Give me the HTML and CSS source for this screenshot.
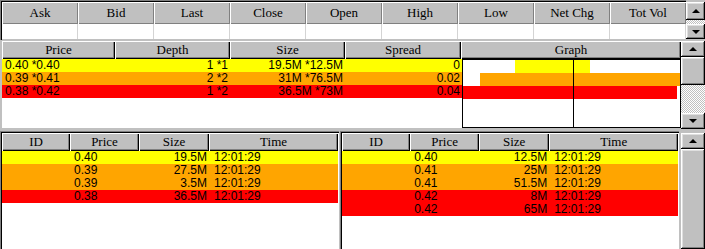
FILE: index.html
```html
<!DOCTYPE html>
<html lang="en">
<head>
  <meta charset="UTF-8" />
  <title>Market Depth</title>
  <link rel="stylesheet" href="styles.css">
</head>
<body>

  <div class="window">

    <!-- quote strip -->
    <div class="pane quotes">
      <div class="sheet">
        <div class="hdr cols-quote">
          <div class="hcell">Ask</div>
          <div class="hcell">Bid</div>
          <div class="hcell">Last</div>
          <div class="hcell">Close</div>
          <div class="hcell">Open</div>
          <div class="hcell">High</div>
          <div class="hcell">Low</div>
          <div class="hcell">Net Chg</div>
          <div class="hcell">Tot Vol</div>
        </div>
        <div class="quote-row cols-quote">
          <div></div><div></div><div></div><div></div><div></div>
          <div></div><div></div><div></div><div></div>
        </div>
      </div>
      <div class="vscroll narrow">
        <div class="sb-btn up"><span class="arrow-up"></span></div>
        <div class="sb-track"></div>
        <div class="sb-btn down"><span class="arrow-down"></span></div>
      </div>
    </div>

    <!-- depth book + graph -->
    <div class="pane book">
      <div class="sheet">
        <div class="hdr cols-book">
          <div class="hcell">Price</div>
          <div class="hcell">Depth</div>
          <div class="hcell">Size</div>
          <div class="hcell">Spread</div>
          <div class="hcell">Graph</div>
        </div>
        <div class="book-body">
          <div class="book-rows">
            <div class="brow lvl-1">
              <div class="left">0.40 *0.40</div>
              <div class="right">1 *1</div>
              <div class="right">19.5M *12.5M</div>
              <div class="right">0</div>
            </div>
            <div class="brow lvl-2">
              <div class="left">0.39 *0.41</div>
              <div class="right">2 *2</div>
              <div class="right">31M *76.5M</div>
              <div class="right">0.02</div>
            </div>
            <div class="brow lvl-3">
              <div class="left">0.38 *0.42</div>
              <div class="right">1 *2</div>
              <div class="right">36.5M *73M</div>
              <div class="right">0.04</div>
            </div>
          </div>
          <div class="graph">
            <div class="bar-row"><div class="bar lvl-1" style="margin-left: 52px; width: 75px;"></div></div>
            <div class="bar-row"><div class="bar lvl-2" style="margin-left: 17px; width: 200px;"></div></div>
            <div class="bar-row"><div class="bar lvl-3" style="margin-left: 0; width: 214px;"></div></div>
          </div>
        </div>
      </div>
      <div class="vscroll">
        <div class="sb-btn up"><span class="arrow-up"></span></div>
        <div class="sb-thumb short"></div>
        <div class="sb-track"></div>
        <div class="sb-btn down"><span class="arrow-down"></span></div>
      </div>
    </div>

    <!-- time & sales -->
    <div class="trades">
      <div class="pane tape">
        <div class="hdr cols-tape">
          <div class="hcell">ID</div>
          <div class="hcell">Price</div>
          <div class="hcell">Size</div>
          <div class="hcell">Time</div>
        </div>
        <div class="tape-body">
          <div class="trow cols-tape lvl-1"><div></div><div class="px">0.40</div><div class="right">19.5M</div><div class="tm">12:01:29</div></div>
          <div class="trow cols-tape lvl-2"><div></div><div class="px">0.39</div><div class="right">27.5M</div><div class="tm">12:01:29</div></div>
          <div class="trow cols-tape lvl-2"><div></div><div class="px">0.39</div><div class="right">3.5M</div><div class="tm">12:01:29</div></div>
          <div class="trow cols-tape lvl-3"><div></div><div class="px">0.38</div><div class="right">36.5M</div><div class="tm">12:01:29</div></div>
        </div>
      </div>
      <div class="pane tape">
        <div class="hdr cols-tape">
          <div class="hcell">ID</div>
          <div class="hcell">Price</div>
          <div class="hcell">Size</div>
          <div class="hcell">Time</div>
        </div>
        <div class="tape-body">
          <div class="trow cols-tape lvl-1"><div></div><div class="px">0.40</div><div class="right">12.5M</div><div class="tm">12:01:29</div></div>
          <div class="trow cols-tape lvl-2"><div></div><div class="px">0.41</div><div class="right">25M</div><div class="tm">12:01:29</div></div>
          <div class="trow cols-tape lvl-2"><div></div><div class="px">0.41</div><div class="right">51.5M</div><div class="tm">12:01:29</div></div>
          <div class="trow cols-tape lvl-3"><div></div><div class="px">0.42</div><div class="right">8M</div><div class="tm">12:01:29</div></div>
          <div class="trow cols-tape lvl-3"><div></div><div class="px">0.42</div><div class="right">65M</div><div class="tm">12:01:29</div></div>
        </div>
      </div>
      <div class="vscroll tall">
        <div class="sb-btn up"><span class="arrow-up"></span></div>
        <div class="sb-thumb fill"></div>
      </div>
    </div>

  </div>

</body>
</html>
```

FILE: styles.css
```css
body {
  margin: 0;
  background: #c0c0c0;
  font-family: 'Liberation Sans', Arial, sans-serif;
  font-size: 12px;
  color: #000;
  overflow: hidden;
}

.window {
  width: 705px;
  height: 249px;
  display: flex;
  flex-direction: column;
  background: #c0c0c0;
}

.pane {
  display: flex;
}

/* header cells, classic raised look */
.hdr {
  display: grid;
  font-family: 'Liberation Serif', 'Times New Roman', serif;
  font-size: 13px;
}

.hcell {
  display: flex;
  align-items: center;
  justify-content: center;
  background: #c0c0c0;
  box-shadow: inset 1px 1px #fff, inset -1px -1px #000, inset -2px -2px #808080;
}

.left { padding-left: 3px; }
.right { text-align: right; padding-right: 2px; }

.lvl-1 { background: #ffff00; }
.lvl-2 { background: #ffa500; }
.lvl-3 { background: #ff0000; }

/* ---- quote strip ---- */
.quotes {
  height: 40px;
}

.quotes .sheet {
  flex: 1;
  padding: 2px 0 1px 2px;
  box-shadow: inset 1px 1px #808080, inset 2px 2px #000;
}

.cols-quote {
  grid-template-columns: repeat(9, 76px);
}

.quotes .hdr {
  height: 22px;
}

.quotes .hcell {
  box-shadow: inset 1px 1px #fff, inset -1px -1px #808080;
}

.quote-row {
  display: grid;
  height: 15px;
  background: #fff;
}

.quote-row div {
  border-right: 1px solid #d4d4d4;
}

/* ---- depth book ---- */
.book {
  height: 89px;
}

.book .sheet {
  flex: 1;
  padding: 1px 0 1px 2px;
  display: flex;
  flex-direction: column;
}

.cols-book {
  grid-template-columns: 113px 115px 115px 116px 1fr;
  height: 18px;
}

.book-body {
  flex: 1;
  display: flex;
  background: #fff;
}

.book-rows {
  width: 460px;
}

.brow {
  display: grid;
  grid-template-columns: 113px 115px 115px 116px;
  height: 13px;
  line-height: 13px;
  white-space: nowrap;
}

.brow div:last-child {
  padding-right: 1px;
}

.graph {
  flex: 1;
  border: 1px solid #000;
  position: relative;
}

.graph::after {
  content: '';
  position: absolute;
  top: 0;
  bottom: 0;
  left: 110px;
  width: 1px;
  background: #000;
}

.bar-row {
  height: 13px;
  display: flex;
}

.bar {
  height: 13px;
}

/* ---- time & sales ---- */
.trades {
  flex: 1;
  display: flex;
  gap: 1px;
  margin-top: 2px;
}

.tape {
  width: 340px;
  flex-direction: column;
  padding: 2px 1px 0 2px;
  box-shadow: inset 1px 1px #808080, inset 2px 2px #000, inset -1px 0 #fff;
}

.cols-tape {
  grid-template-columns: 68px 69px 70px 1fr;
}

.tape .hdr {
  height: 18px;
}

.tape-body {
  flex: 1;
  background: #fff;
}

.trow {
  display: grid;
  height: 13px;
  line-height: 13px;
  white-space: nowrap;
}

.trow .px { padding-left: 4px; }
.trow .tm { padding-left: 5px; }

/* ---- scrollbars ---- */
.vscroll {
  width: 24px;
  display: flex;
  flex-direction: column;
  padding-top: 1px;
}

.vscroll.narrow {
  width: 19px;
  padding-top: 2px;
  padding-bottom: 1px;
}

.vscroll.tall {
  padding: 2px 0 0 1px;
}

.sb-btn {
  height: 16px;
  display: flex;
  align-items: center;
  justify-content: center;
  background: #c0c0c0;
  box-shadow: inset -1px -1px #000, inset 1px 1px #fff, inset -2px -2px #808080, inset 2px 2px #dfdfdf;
}

.narrow .sb-btn.up { height: 18px; }
.narrow .sb-btn.down { height: 15px; }

.sb-thumb {
  background: #c0c0c0;
  box-shadow: inset -1px -1px #000, inset 1px 1px #fff, inset -2px -2px #808080, inset 2px 2px #dfdfdf;
}

.sb-thumb.short { height: 28px; }
.sb-thumb.fill { flex: 1; }

.sb-track {
  flex: 1;
  background: repeating-conic-gradient(#fff 0 25%, #c0c0c0 0 50%) 0 0 / 2px 2px;
}

.arrow-up, .arrow-down {
  width: 0;
  height: 0;
  border-left: 4px solid transparent;
  border-right: 4px solid transparent;
}

.arrow-up { border-bottom: 4px solid #000; }
.arrow-down { border-top: 4px solid #000; }
```
